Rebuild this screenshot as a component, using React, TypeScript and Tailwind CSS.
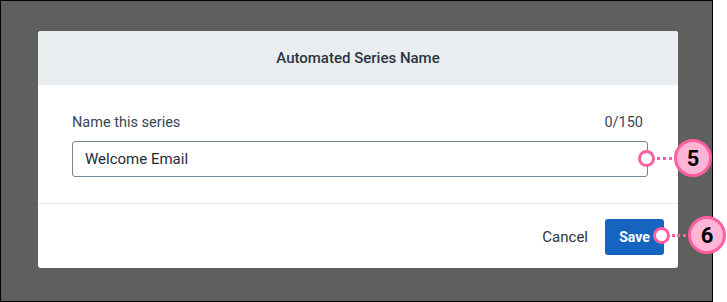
import React from "react";

function Callout({ n, className, line }: { n: string; className: string; line: string }) {
  return (
    <div className={`absolute flex items-center ${className}`}>
      <span className="h-[17px] w-[17px] rounded-full border-[3px] border-[#ff5fa2] bg-white" />
      <span className={`mx-[2px] border-t-[3px] border-dotted border-[#ff5fa2] ${line}`} />
      <span className="flex h-[38px] w-[38px] items-center justify-center rounded-full border-[3px] border-[#ff5fa2] bg-[#ffb6d6] text-[22px] font-bold text-black">
        {n}
      </span>
    </div>
  );
}

export default function App() {
  return (
    <div className="relative h-[302px] w-[727px] bg-white font-['Roboto',sans-serif]">
      <div className="h-[302px] w-[713px] border border-black bg-[#5e605e] pl-[37px] pt-[30px]">
        <div className="w-[640px] overflow-hidden rounded-[3px] bg-white">
          <div className="flex h-[54px] items-center justify-center bg-[#e9edf0]">
            <h2 className="text-[15px] font-medium text-[#2b3542]">Automated Series Name</h2>
          </div>
          <div className="border-b border-[#e6e8ea] px-[34px] pb-[26px] pt-[28px]">
            <div className="flex h-5 items-center justify-between text-[14.5px] text-[#3a4654]">
              <span>Name this series</span>
              <span className="pr-[1px]">0/150</span>
            </div>
            <div className="mt-2 flex h-9 w-[576px] items-center rounded-[3px] border border-[#72879a] px-3 text-[15px] text-[#1f2a37]">
              Welcome Email
            </div>
          </div>
          <div className="flex h-[64px] items-center justify-end gap-[17px] pr-[14px] pt-[2px]">
            <button className="text-[15px] text-[#2b3542]">Cancel</button>
            <button className="h-9 w-[59px] rounded-[3px] bg-[#1565c0] text-[14px] font-bold text-white">
              Save
            </button>
          </div>
        </div>
      </div>
      <Callout n="5" line="w-[15px]" className="left-[638px] top-[139px]" />
      <Callout n="6" line="w-[14px]" className="left-[653px] top-[216px]" />
    </div>
  );
}
